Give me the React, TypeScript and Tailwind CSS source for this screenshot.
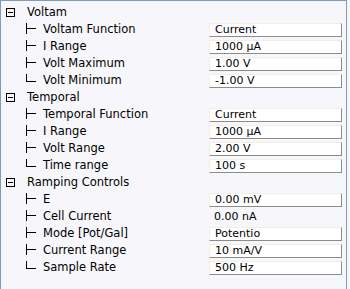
import React from "react";

type Child = { label: string; value: string; boxed?: boolean };
type Group = { title: string; items: Child[] };

const groups: Group[] = [
  {
    title: "Voltam",
    items: [
      { label: "Voltam Function", value: "Current" },
      { label: "I Range", value: "1000 µA" },
      { label: "Volt Maximum", value: "1.00 V" },
      { label: "Volt Minimum", value: "-1.00 V" },
    ],
  },
  {
    title: "Temporal",
    items: [
      { label: "Temporal Function", value: "Current" },
      { label: "I Range", value: "1000 µA" },
      { label: "Volt Range", value: "2.00 V" },
      { label: "Time range", value: "100 s" },
    ],
  },
  {
    title: "Ramping Controls",
    items: [
      { label: "E", value: "0.00 mV" },
      { label: "Cell Current", value: "0.00 nA", boxed: false },
      { label: "Mode [Pot/Gal]", value: "Potentio" },
      { label: "Current Range", value: "10 mA/V" },
      { label: "Sample Rate", value: "500 Hz" },
    ],
  },
];

function Minus() {
  return (
    <svg width="9" height="9" viewBox="0 0 9 9" className="block">
      <rect x="0.5" y="0.5" width="8" height="8" fill="none" stroke="#000" strokeWidth="1" />
      <line x1="2" y1="4.5" x2="7" y2="4.5" stroke="#000" strokeWidth="1" />
    </svg>
  );
}

function Branch({ last }: { last: boolean }) {
  return (
    <svg width="17" height="17" viewBox="0 0 17 17" className="block shrink-0">
      {last ? (
        <>
          <line x1="0.5" y1="2" x2="0.5" y2="9.5" stroke="#000" strokeWidth="1" />
          <line x1="0" y1="9.5" x2="10" y2="9.5" stroke="#000" strokeWidth="1" />
        </>
      ) : (
        <>
          <line x1="0.5" y1="2" x2="0.5" y2="13" stroke="#000" strokeWidth="1" />
          <line x1="0" y1="7.5" x2="10" y2="7.5" stroke="#000" strokeWidth="1" />
        </>
      )}
    </svg>
  );
}

export default function App() {
  return (
    <div className="w-[350px] h-[289px] bg-[#f7f7fb] overflow-hidden">
      <div
        className="w-[347px] h-[289px] border-l border-r border-t border-[#7f9db9] bg-[#f7f7fb] pt-[3px] text-black"
        style={{ fontFamily: '"DejaVu Sans", sans-serif' }}
      >
        {groups.map((g) => (
          <div key={g.title}>
            <div className="h-[17px] flex items-center">
              <div className="ml-[5px] w-[9px]">
                <Minus />
              </div>
              <span className="ml-[12px] text-[11.5px] leading-none whitespace-nowrap">{g.title}</span>
            </div>
            {g.items.map((c, i) => (
              <div key={c.label} className="h-[17px] flex items-center">
                <div className="ml-[25px] flex items-center shrink-0">
                  <Branch last={i === g.items.length - 1} />
                </div>
                <span className="text-[11.5px] leading-none w-[166px] shrink-0 whitespace-nowrap">{c.label}</span>
                {c.boxed === false ? (
                  <div className="w-[133px] h-[14px] pl-[5px] flex items-center text-[11px] leading-none whitespace-nowrap shrink-0">
                    {c.value}
                  </div>
                ) : (
                  <div className="w-[133px] h-[14px] pl-[5px] flex items-center shrink-0 whitespace-nowrap bg-white border-t border-l border-t-[#f1efe2] border-l-[#f1efe2] border-r border-b border-r-[#8c8c8c] border-b-[#8c8c8c] text-[11px] leading-none">
                    {c.value}
                  </div>
                )}
              </div>
            ))}
          </div>
        ))}
      </div>
    </div>
  );
}
